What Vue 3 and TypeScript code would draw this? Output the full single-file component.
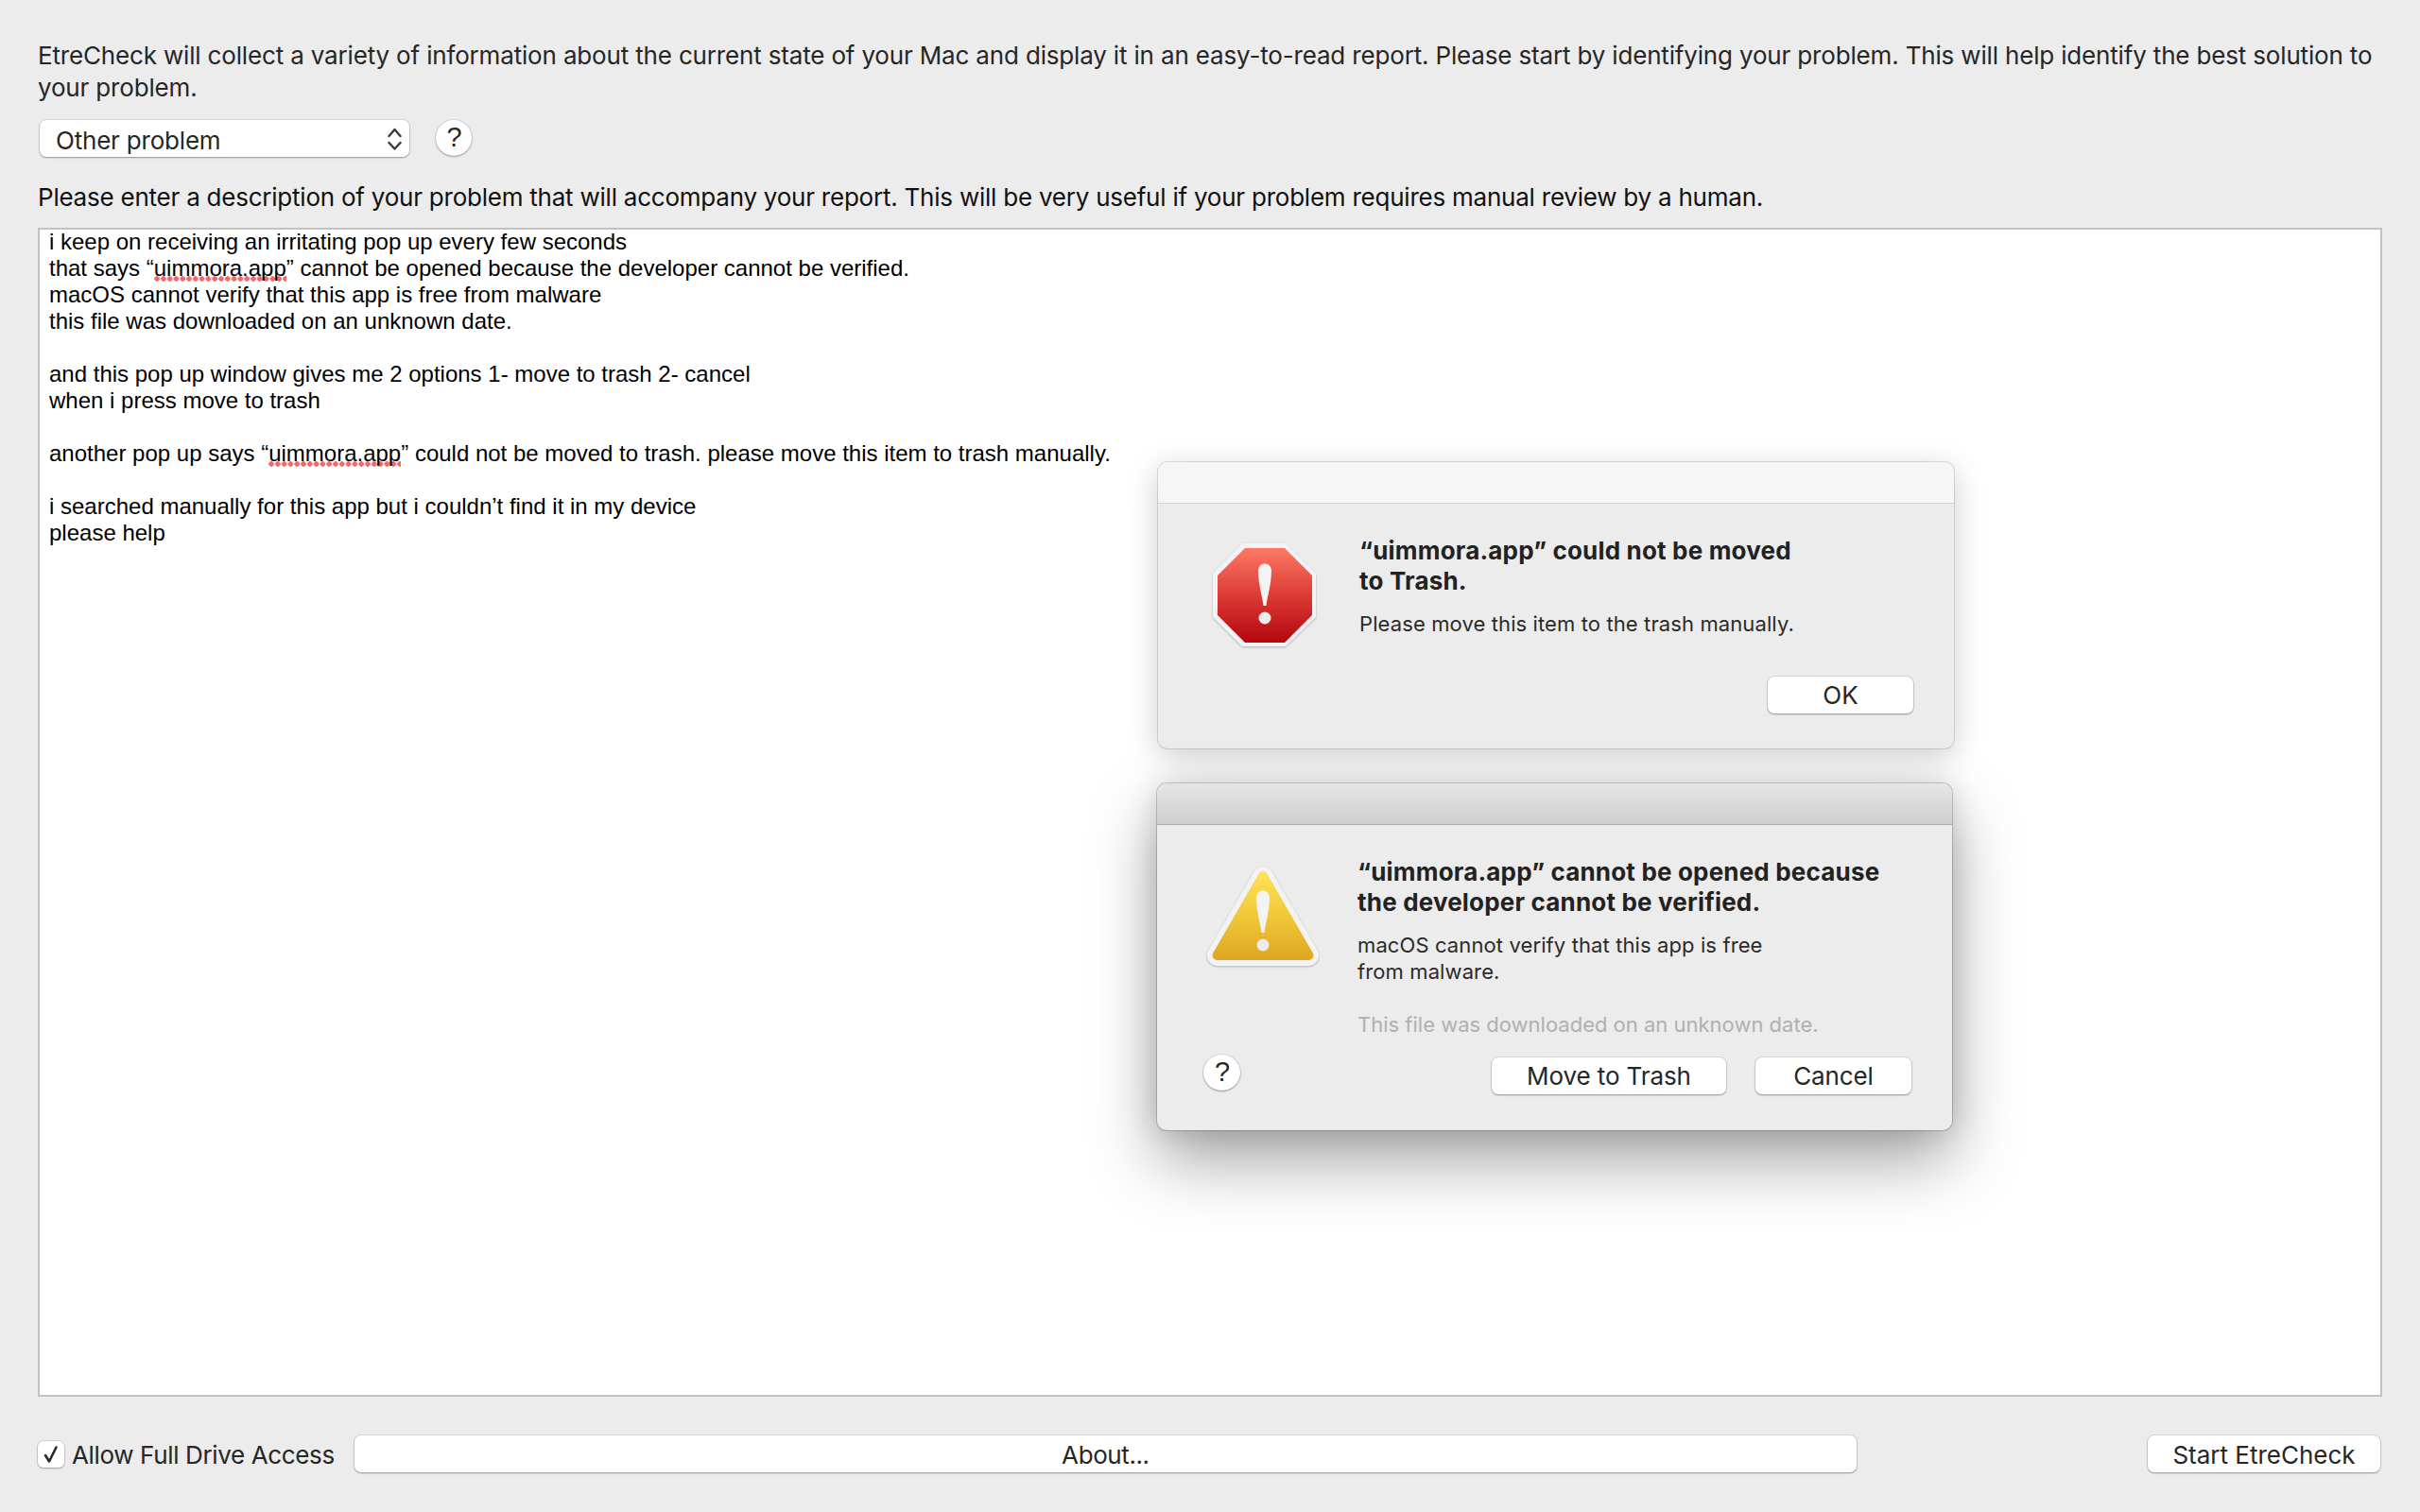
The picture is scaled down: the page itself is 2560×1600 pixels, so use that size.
<script setup lang="ts">
interface Line { before: string; flagged?: string; after?: string }
const lines: Line[] = [
  { before: 'i keep on receiving an irritating pop up every few seconds' },
  { before: 'that says “', flagged: 'uimmora.app', after: '” cannot be opened because the developer cannot be verified.' },
  { before: 'macOS cannot verify that this app is free from malware' },
  { before: 'this file was downloaded on an unknown date.' },
  { before: '' },
  { before: 'and this pop up window gives me 2 options 1- move to trash 2- cancel' },
  { before: 'when i press move to trash' },
  { before: '' },
  { before: 'another pop up says “', flagged: 'uimmora.app', after: '” could not be moved to trash. please move this item to trash manually.' },
  { before: '' },
  { before: 'i searched manually for this app but i couldn’t find it in my device' },
  { before: 'please help' },
]
</script>

<template>
  <div class="page">
    <p class="label intro">EtreCheck will collect a variety of information about the current state of your Mac and display it in an easy-to-read report. Please start by identifying your problem. This will help identify the best solution to your problem.</p>
    <div class="picker-row">
      <div class="select">
        <span>Other problem</span>
        <svg width="15" height="24" viewBox="0 0 15 24" fill="none" stroke="#3a3a3a" stroke-width="2.4" stroke-linecap="round" stroke-linejoin="round">
          <path d="M1.5 9 7.5 2 13.5 9" />
          <path d="M1.5 16 7.5 22.5 13.5 16" />
        </svg>
      </div>
      <div class="help">?</div>
    </div>
    <p class="label desc">Please enter a description of your problem that will accompany your report. This will be very useful if your problem requires manual review by a human.</p>
    <div class="editor">
      <p v-for="(line, i) in lines" :key="i" class="editor-line">{{ line.before }}<span v-if="line.flagged" class="flagged">{{ line.flagged }}</span>{{ line.after }}</p>
    </div>
    <div class="footer">
      <div class="check">
        <svg width="20" height="20" viewBox="0 0 20 20" fill="none" stroke="#2b2b2b" stroke-width="2.6" stroke-linecap="round" stroke-linejoin="round">
          <path d="M4 11 8 17.5 15.5 2.5" />
        </svg>
      </div>
      <span class="check-label">Allow Full Drive Access</span>
      <div class="btn about">About...</div>
      <div class="btn start">Start EtreCheck</div>
    </div>

    <section class="dialog dialog-error">
      <header class="titlebar"></header>
      <div class="dialog-body">
        <div class="message">
          <svg class="icon" width="110" height="110" viewBox="23 15 110 110">
            <defs>
              <linearGradient id="redFill" x1="0" y1="0" x2="0" y2="1">
                <stop offset="0" stop-color="#ff7866" />
                <stop offset="0.5" stop-color="#dc3b36" />
                <stop offset="1" stop-color="#b4060f" />
              </linearGradient>
            </defs>
            <polygon points="54,15 100,15 132,47 132,93 100,124 54,124 23,93 23,47" fill="#f3f3f3" />
            <polygon points="57,20 99,20 128,49 128,91 99,120 57,120 28,91 28,49" fill="url(#redFill)" />
            <path d="M71 44C71 34 85 34 85 44 85 58 80 74 79.5 81H76.5C76 74 71 58 71 44Z" fill="#f4f4f4" />
            <circle cx="78" cy="94" r="6.5" fill="#ececec" />
          </svg>
          <div class="copy">
            <h2 class="title">“uimmora.app” could not be moved<br />to Trash.</h2>
            <p class="info">Please move this item to the trash manually.</p>
          </div>
        </div>
        <div class="actions">
          <div class="btn ok">OK</div>
        </div>
      </div>
    </section>

    <section class="dialog dialog-warning">
      <header class="titlebar"></header>
      <div class="dialog-body">
        <div class="message">
          <svg class="icon" width="118" height="105" viewBox="17 17 118 105">
            <defs>
              <linearGradient id="goldFill" gradientUnits="userSpaceOnUse" x1="0" y1="21" x2="0" y2="116">
                <stop offset="0" stop-color="#ffe258" />
                <stop offset="0.5" stop-color="#f1c93a" />
                <stop offset="1" stop-color="#dfa622" />
              </linearGradient>
            </defs>
            <path d="M76 28 28 111H124Z" fill="#f3f3f3" stroke="#f3f3f3" stroke-width="22" stroke-linejoin="round" />
            <path d="M76 27 27.500 111H124.500Z" fill="url(#goldFill)" stroke="url(#goldFill)" stroke-width="10" stroke-linejoin="round" />
            <path d="M69 50C69 40 83 40 83 50 83 64 78 80 77.500 87H74.500C74 80 69 64 69 50Z" fill="#f4f4f4" />
            <circle cx="76" cy="100" r="6.500" fill="#ececec" />
          </svg>
          <div class="copy">
            <h2 class="title">“uimmora.app” cannot be opened because<br />the developer cannot be verified.</h2>
            <p class="info">macOS cannot verify that this app is free<br />from malware.</p>
            <p class="info muted">This file was downloaded on an unknown date.</p>
          </div>
        </div>
        <div class="actions">
          <div class="help help-dialog">?</div>
          <div class="btn trash">Move to Trash</div>
          <div class="btn cancel">Cancel</div>
        </div>
      </div>
    </section>
  </div>
</template>

<style scoped>
.page {
  position: relative;
  box-sizing: border-box;
  width: 2560px;
  height: 1600px;
  padding: 42px 40px 42px;
  display: flex;
  flex-direction: column;
  background: #ececec;
  color: #262626;
  font-family: Inter, "Noto Sans", sans-serif;
  font-size: 26px;
  overflow: hidden;
}
p, h2 { margin: 0; }
.label { line-height: 34px; letter-spacing: -0.23px; }
.intro { letter-spacing: -0.165px; }
.picker-row {
  display: flex;
  align-items: flex-start;
  margin: 17px 0 0 2px;
  gap: 28px;
  height: 39px;
}
.select {
  box-sizing: border-box;
  width: 391px;
  height: 39px;
  padding: 3px 8px 0 17px;
  display: flex;
  align-items: center;
  justify-content: space-between;
  background: #fff;
  border-radius: 7px;
  letter-spacing: -0.2px;
  box-shadow: 0 0 0 1px rgba(0,0,0,.08), 0 1px 2px rgba(0,0,0,.32);
}
.select svg { margin-top: -3px; }
.help {
  box-sizing: border-box;
  width: 38px;
  height: 38px;
  padding: 0 0 1px 1px;
  border-radius: 50%;
  background: #fff;
  font-family: "Liberation Sans", Arial, sans-serif;
  font-size: 29px;
  display: flex;
  align-items: center;
  justify-content: center;
  box-shadow: 0 0 0 1px rgba(0,0,0,.08), 0 1px 2px rgba(0,0,0,.32);
}
.desc { margin-top: 26px; color: #111; }
.editor {
  box-sizing: border-box;
  flex: 1;
  margin-top: 15px;
  padding: 0 10px;
  background: #fff;
  border: 2px solid #c2c2c2;
  font-family: "Liberation Sans", Arial, sans-serif;
  font-size: 24px;
  line-height: 28px;
  color: #000;
}
.editor-line { min-height: 28px; position: relative; top: -1px; }
.flagged {
  background-image: radial-gradient(circle at 3px 3px, #f06a6c 2.500px, transparent 3px);
  background-size: 6.800px 6px;
  background-repeat: repeat-x;
  background-position: 0 22px;
  padding-bottom: 3px;
}
.footer {
  display: flex;
  align-items: center;
  margin: 41px 2px 0 0;
  height: 39px;
}
.check {
  box-sizing: border-box;
  width: 28px;
  height: 28px;
  display: flex;
  align-items: center;
  justify-content: center;
  background: #fff;
  border-radius: 6px;
  box-shadow: 0 0 0 1px rgba(0,0,0,.1), 0 1px 2px rgba(0,0,0,.25);
}
.check-label { margin-left: 8px; padding-top: 2px; letter-spacing: -0.36px; }
.btn {
  box-sizing: border-box;
  height: 39px;
  padding-top: 2px;
  display: flex;
  align-items: center;
  justify-content: center;
  background: #fff;
  border-radius: 7px;
  box-shadow: 0 0 0 1px rgba(0,0,0,.08), 0 1px 2px rgba(0,0,0,.32);
}
.about { flex: 1; margin: 0 308px 0 21px; letter-spacing: -0.4px; }
.start { width: 246px; }

.dialog {
  position: absolute;
  box-sizing: border-box;
  background: #ececec;
  border-radius: 10px;
  overflow: hidden;
}
.dialog-error {
  left: 1225px;
  top: 489px;
  width: 842px;
  height: 303px;
  box-shadow: 0 0 0 1px rgba(0,0,0,.12), 0 8px 34px rgba(0,0,0,.2);
}
.dialog-warning {
  left: 1224px;
  top: 829px;
  width: 841px;
  height: 367px;
  box-shadow: 0 0 0 1px rgba(0,0,0,.18), 0 32px 70px rgba(0,0,0,.36), 0 0 30px rgba(0,0,0,.14);
}
.titlebar {
  box-sizing: border-box;
  height: 44px;
  background: #f6f6f6;
  border-bottom: 1px solid #d4d4d4;
}
.dialog-warning .titlebar {
  background: linear-gradient(#e6e6e6, #cfcfcf);
  border-bottom: 1px solid #aeaeae;
}
.dialog-body {
  padding: 34px 43px 38px 58px;
}
.dialog-body .btn { padding-top: 0; }
.dialog-warning .dialog-body {
  padding: 34px 43px 38px 49px;
}
.message {
  display: flex;
  gap: 45px;
}
.dialog-warning .message {
  gap: 41px;
  margin-left: 4px;
}
.icon {
  flex: none;
  margin-top: 8px;
  filter: drop-shadow(0 1px 1px rgba(0,0,0,.25));
}
.dialog-warning .icon { margin-top: 10px; }
.title {
  font-size: 26px;
  line-height: 32px;
  font-weight: 700;
  letter-spacing: 0.18px;
  color: #222;
}
.info {
  margin-top: 15px;
  font-size: 22px;
  line-height: 28px;
  letter-spacing: 0.11px;
  color: #2a2a2a;
}
.muted {
  margin-top: 28px;
  letter-spacing: 0;
  color: #b0b0b0;
}
.actions {
  display: flex;
  justify-content: flex-end;
  margin-top: 31px;
}
.dialog-warning .actions {
  margin-top: 21px;
  align-items: flex-start;
}
.ok { width: 154px; }
.help-dialog {
  margin: -3px auto 0 0;
  width: 39px;
}
.trash { width: 248px; letter-spacing: -0.1px; }
.cancel { width: 165px; margin-left: 31px; letter-spacing: -0.1px; }
</style>

<style>
html, body { margin: 0; background: #ececec; }
</style>
